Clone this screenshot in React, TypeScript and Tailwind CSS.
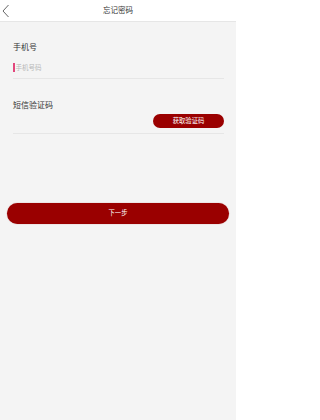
import React from "react";

export default function App() {
  return (
    <div
      className="w-[236px] h-[420px] bg-[#f4f4f4] overflow-hidden"
      style={{ fontFamily: '"Noto Sans CJK SC", "Noto Sans", sans-serif' }}
    >
      <header className="h-[22px] bg-white border-b border-[#e6e6e6] grid grid-cols-[1fr_auto_1fr] items-center">
        <div className="flex items-center pl-[2px]">
          <svg width="8" height="14" viewBox="0 0 8 14" fill="none">
            <polyline points="6.5,1 1,7 6.5,13" stroke="#555" strokeWidth="0.9" />
          </svg>
        </div>
        <div className="text-[7.5px] leading-none text-[#333] pb-[1px]">忘记密码</div>
        <div />
      </header>

      <section className="pl-[13px] pr-[12px] pt-[20px]">
        <div className="text-[8px] leading-[10px] text-[#333]">手机号</div>
        <div className="mt-[11px] h-[16px] border-b border-[#e6e6e6] flex items-start">
          <span className="w-[1.5px] h-[9px] bg-[#e2467c]" />
          <span className="text-[6.5px] leading-[9px] text-[#b8b8b8] ml-[1px]">手机号码</span>
        </div>

        <div className="mt-[21px] text-[8px] leading-[10px] text-[#333]">短信验证码</div>
        <div className="mt-[4px] pb-[5px] border-b border-[#e6e6e6] flex justify-end">
          <button className="w-[71px] h-[14px] rounded-full bg-[#9a0000] text-white text-[6.3px] leading-none flex items-center justify-center">
            获取验证码
          </button>
        </div>
      </section>

      <div className="px-[7px] mt-[69px]">
        <button className="w-full h-[21px] rounded-full bg-[#9a0000] text-white text-[6.3px] leading-none flex items-center justify-center shadow-[0_0_1px_rgba(154,0,0,0.6)]">
          下一步
        </button>
      </div>
    </div>
  );
}
